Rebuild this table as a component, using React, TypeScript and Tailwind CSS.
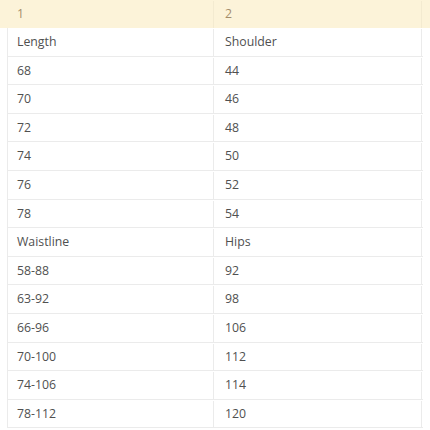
const rows: [string, string][] = [
  ["Length", "Shoulder"],
  ["68", "44"],
  ["70", "46"],
  ["72", "48"],
  ["74", "50"],
  ["76", "52"],
  ["78", "54"],
  ["Waistline", "Hips"],
  ["58-88", "92"],
  ["63-92", "98"],
  ["66-96", "106"],
  ["70-100", "112"],
  ["74-106", "114"],
  ["78-112", "120"],
];

export default function App() {
  return (
    <div className="h-[430px] w-[430px] overflow-hidden bg-white font-['Open_Sans',sans-serif] text-[12.3px]">
      {/* header band runs full width, table lines sit inside it */}
      <div className="flex h-[28px] bg-[#fcf3d9] pt-[1px] text-[#a48d6b]">
        <div className="flex w-[214px] items-center border-r border-[#f3ead0] pl-[17px]">1</div>
        <div className="flex w-[208px] items-center border-r border-[#f3ead0] pl-[11px]">2</div>
      </div>
      <div className="ml-[7px] w-[416px] border-l border-[#ebebeb] text-[#505050]">
        {rows.map(([a, b], i) => (
          <div key={i} className="grid h-[28.6px] grid-cols-[206px_208px] border-b border-[#ebebeb] pt-[1px]">
            <div className="flex items-center border-r border-[#ebebeb] pl-[9px]">{a}</div>
            <div className="flex items-center border-r border-[#ebebeb] pl-[11px]">{b}</div>
          </div>
        ))}
      </div>
    </div>
  );
}
